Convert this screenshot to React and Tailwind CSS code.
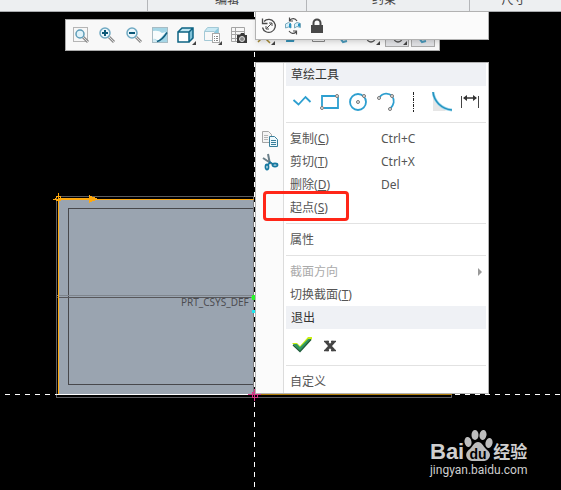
import React from 'react';

const ribbonGroups = [
  { label: '', className: 'w-[148px] border-r' },
  { label: '编辑', className: 'w-[159px] border-r' },
  { label: '约束', className: 'w-[163px] border-r pr-2' },
  { label: '尺寸', className: 'flex-1 pr-1' },
];

const Icon = ({ size = 20, children }) => (
  <svg width={size} height={size} viewBox={`0 0 ${size} ${size}`} fill="none" aria-hidden="true">
    {children}
  </svg>
);

const Corner = () => <path d="M20 16v4h-4z" fill="#444" />;

const Magnifier = ({ children }) => (
  <>
    <path d="M12 12l5 5" stroke="#8d8d8d" strokeWidth="3" />
    <path d="M12 12l5 5" stroke="#dcdcdc" />
    <circle cx="8" cy="8" r="5" fill="#eaf6fb" stroke="#6fa9c2" strokeWidth="1.5" />
    {children}
  </>
);

const ZoomFitIcon = () => (
  <Icon>
    <rect x="2.5" y="2.5" width="14" height="14" fill="#f7f7f7" stroke="#b5b5b5" />
    <path d="M12 12l5 5" stroke="#8d8d8d" strokeWidth="3" />
    <path d="M12 12l5 5" stroke="#dcdcdc" />
    <circle cx="9" cy="9" r="4" fill="#e0f3fa" stroke="#5e9db8" strokeWidth="1.5" />
  </Icon>
);

const ZoomInIcon = () => (
  <Icon>
    <Magnifier>
      <path d="M5 8h6M8 5v6" stroke="#0a5878" strokeWidth="2" />
    </Magnifier>
  </Icon>
);

const ZoomOutIcon = () => (
  <Icon>
    <Magnifier>
      <path d="M5 8h6" stroke="#0a5878" strokeWidth="2" />
    </Magnifier>
  </Icon>
);

const RepaintIcon = () => (
  <Icon>
    <rect x="2.5" y="2.5" width="15" height="15" fill="#a5d6e6" stroke="#a8bcc4" />
    <path d="M3 6q6-1 9 2l4-1-8 9q-3-3-5-2z" fill="#f8fcfd" />
    <path d="M3 14q3 0 4 3H3z" fill="#d3ecf4" />
    <path d="M7 16.500q5-1 10-9" stroke="#125f80" strokeWidth="1.500" />
  </Icon>
);

const CubeIcon = () => (
  <Icon>
    <path d="M2 7l4-4h11l-4 4z" fill="#bfe6f2" />
    <path d="M13 7l4-4v10l-4 4z" fill="#7fc1d8" />
    <path d="M2 7h11v10H2z" fill="#fff" />
    <path d="M2 7h11v10H2zM2 7l4-4h11v10l-4 4M13 7l4-4" stroke="#0d6383" strokeWidth="1.5" />
    <Corner />
  </Icon>
);

const SavedViewIcon = () => (
  <Icon>
    <path d="M2 6l3-3h11l-3 3z" fill="#c9e9f4" />
    <path d="M13 6l3-3v9l-3 3z" fill="#8cc9de" />
    <path d="M2.5 6.5h10v9h-10zM2.5 6.5l3-4h11v6" stroke="#a3c9d6" />
    <rect x="10.5" y="8.5" width="7" height="9" fill="#fff" stroke="#a8a8a8" />
    <path d="M12 11.500h1M14 11.500h2M12 13.500h1M14 13.500h2M12 15.500h1M14 15.500h2" stroke="#888" />
    <Corner />
  </Icon>
);

const ViewManagerIcon = () => (
  <Icon>
    <path d="M2.500 2.500h13v14h-13zM2 6.500h14M2 9.500h14M2 13.500h14M6.500 3v14" stroke="#a5a5a5" />
    <path d="M8 10h3l1-2h3l1 2h2v8H8z" fill="#3b3b3b" />
    <circle cx="13" cy="14" r="2.500" fill="#8a8a8a" stroke="#ddd" />
  </Icon>
);

const DatumIcon = () => (
  <Icon>
    <path d="M3 17L15 5M5 8l10 10" stroke="#a58a34" strokeWidth="1.5" />
    <Corner />
  </Icon>
);

const PlaneIcon = () => (
  <Icon>
    <path d="M6 6h9l-2 11H5z" fill="#3692b8" />
  </Icon>
);

const AnnotationIcon = () => (
  <Icon>
    <path d="M4.500 5.500h12v11h-12z" stroke="#888" />
  </Icon>
);

const SpinIcon = () => (
  <Icon>
    <path d="M6 13l3 4 4-1" stroke="#4a9bbd" strokeWidth="2" />
  </Icon>
);

const DisplayIcon = () => (
  <Icon>
    <circle cx="11" cy="13" r="4" stroke="#555" strokeWidth="1.5" />
    <Corner />
  </Icon>
);

const viewTools = [
  { name: 'Refit', icon: ZoomFitIcon },
  { name: 'Zoom in', icon: ZoomInIcon },
  { name: 'Zoom out', icon: ZoomOutIcon },
  { name: 'Repaint', icon: RepaintIcon },
  { name: 'Display style', icon: CubeIcon },
  { name: 'Saved orientations', icon: SavedViewIcon },
  { name: 'View manager', icon: ViewManagerIcon },
  { name: 'Datum display', icon: DatumIcon },
  { name: 'Sketch view', icon: PlaneIcon },
  { name: 'Annotation display', icon: AnnotationIcon },
  { name: 'Spin center', icon: SpinIcon },
  { name: 'Sketcher display', icon: DisplayIcon },
  { name: 'Shade closed loops', icon: DisplayIcon, pressed: true },
  { name: 'Highlight open ends', icon: SpinIcon, pressed: true },
];

const ToggleDirectionIcon = () => (
  <Icon>
    <path d="M5 5.500a6.500 6.500 0 1 1-1.500 6" stroke="#4a4a4a" strokeWidth="1.300" />
    <path d="M3.500 2.500v5h5" stroke="#4a4a4a" strokeWidth="1.300" />
    <path d="M7.500 12.500l5-5M7 10v3h3M10 7h3v3" stroke="#4a4a4a" />
  </Icon>
);

const ReplaceIcon = () => (
  <Icon>
    <path d="M2.500 8l3-1.500 2.500 1.500v4l-2.500-1-3 1zM11.500 8l2.500-1.500 3.500 1v4l-3.500-1-2.500 1.500z" fill="#d9f0f9" stroke="#78a9bd" />
    <path d="M6 8l2-1v5l-2-1zM15 8l2-1v4l-2-1z" fill="#2593c4" />
    <path d="M14 5c-2-3-5-3-7-1M6.500 1.500V5H10M6 15c2 3 5 3 7 1M13.500 18.500V15H10" stroke="#4a4a4a" strokeWidth="1.200" />
  </Icon>
);

const LockIcon = () => (
  <Icon>
    <rect x="4" y="9" width="12" height="8" fill="#484848" />
    <path d="M6.500 10V7a3.500 3.500 0 0 1 7 0v3" stroke="#484848" strokeWidth="2" />
  </Icon>
);

const Handle = ({ x, y }) => <circle cx={x} cy={y} r="1.500" fill="#e8e8e8" stroke="#777" />;

const PolylineIcon = () => (
  <Icon>
    <path d="M1.500 8l5 4.500 7-7.500 5 5" stroke="#2d9fd0" strokeWidth="1.800" />
  </Icon>
);

const RectangleIcon = () => (
  <Icon>
    <path d="M16 4H2v12M4 16h14V5" stroke="#2d9fd0" strokeWidth="1.800" />
    <Handle x={17} y={4} />
    <Handle x={2} y={16} />
  </Icon>
);

const CircleIcon = () => (
  <Icon>
    <circle cx="10" cy="10" r="8" stroke="#2d9fd0" strokeWidth="1.800" />
    <Handle x={10} y={10} />
    <Handle x={16} y={4} />
  </Icon>
);

const ArcIcon = () => (
  <Icon>
    <path d="M3 6C7 0 13 1 16 4c3 4 2 9-2 13" stroke="#2d9fd0" strokeWidth="1.800" />
    <Handle x={3} y={6} />
    <Handle x={16} y={4} />
    <Handle x={14} y={17} />
  </Icon>
);

const CenterlineIcon = () => (
  <Icon>
    <path d="M9.500 0v20" stroke="#222" strokeDasharray="3 1 1 1" />
  </Icon>
);

const FilletIcon = () => (
  <Icon>
    <path d="M1 4v15h13z" fill="#e6e6e6" />
    <path d="M1 0c1 9 8 17 19 18" stroke="#9fd8ee" strokeWidth="3" />
    <path d="M1 0c1 9 8 17 19 18" stroke="#2493bf" strokeWidth="1.500" />
  </Icon>
);

const DimensionIcon = () => (
  <Icon>
    <path d="M1.500 4v12M18.500 4v12" stroke="#444" />
    <path d="M4 6h12" stroke="#333" strokeWidth="1.500" />
    <path d="M3 6l4-3v6zM17 6l-4-3v6z" fill="#333" />
  </Icon>
);

const CheckIcon = () => (
  <Icon>
    <path d="M0 8h5l3 3 8-9h4v2L8 16z" fill="#c8ee12" />
    <path d="M1 9h4l3 3 8-8 3 0L8 16z" fill="#2f9a63" />
    <path d="M1 10l7 6.500L19 4.500" stroke="#1d5c3c" strokeWidth="1.300" />
  </Icon>
);

const CrossIcon = () => (
  <Icon>
    <path d="M6 6.500l8 9M14 6.500l-8 9" stroke="#444" strokeWidth="3" />
    <path d="M4 6.500h5M11 6.500h5M4 15.500h5M11 15.500h5" stroke="#444" strokeWidth="1.500" />
  </Icon>
);

const CopyIcon = () => (
  <Icon>
    <path d="M2.500 2.500h6l3 3v8h-9z" fill="#f4f4f4" stroke="#a5a5a5" />
    <path d="M4 6.500h4M4 8.500h4M4 10.500h4" stroke="#b5b5b5" />
    <path d="M9.500 7.500h5l3 3v7h-8z" fill="#eef9fd" stroke="#397f9b" />
    <path d="M11 11.500h5M11 13.500h5M11 15.500h5" stroke="#397f9b" />
  </Icon>
);

const CutIcon = () => (
  <Icon>
    <path d="M8 2l2 10M3 6l9 6" stroke="#6a7f89" strokeWidth="2" />
    <ellipse cx="7" cy="15" rx="1.500" ry="2.500" stroke="#1578a0" strokeWidth="1.800" />
    <ellipse cx="15" cy="13" rx="2.500" ry="1.500" stroke="#1578a0" strokeWidth="1.800" />
    <path d="M8 13l2-3 3 2" stroke="#1578a0" strokeWidth="1.500" />
  </Icon>
);

const quickTools = [
  { name: 'Toggle direction', icon: ToggleDirectionIcon },
  { name: 'Replace', icon: ReplaceIcon },
  { name: 'Lock', icon: LockIcon },
];

const sketchTools = [
  { name: 'Line chain', icon: PolylineIcon },
  { name: 'Rectangle', icon: RectangleIcon },
  { name: 'Circle', icon: CircleIcon },
  { name: 'Arc', icon: ArcIcon },
  { name: 'Centerline', icon: CenterlineIcon },
  { name: 'Fillet', icon: FilletIcon },
  { name: 'Dimension', icon: DimensionIcon },
];

const exitTools = [
  { name: 'OK', icon: CheckIcon },
  { name: 'Cancel', icon: CrossIcon },
];

const Ribbon = () => (
  <header className="flex h-3 overflow-hidden border-b border-[#a9abae] bg-[#edeff1] text-xs text-[#444]">
    {ribbonGroups.map((group) => (
      <div
        key={group.label}
        className={`flex items-end justify-center border-[#b4b6b9] pb-[3px] ${group.className}`}
      >
        {group.label}
      </div>
    ))}
  </header>
);

const ViewToolbar = () => (
  <div
    role="toolbar"
    className="relative mt-[7px] ml-[65px] flex h-8 w-[375px] items-center justify-between border border-[#aaa] bg-[#f8f8f8] pr-1 pl-[3px]"
  >
    {viewTools.map(({ name, icon: ToolIcon, pressed }) => (
      <button
        key={name}
        aria-label={name}
        className={`flex h-6 w-6 items-center justify-center ${
          pressed ? 'border border-[#aaa] bg-[#e2e3e6]' : ''
        }`}
      >
        <ToolIcon />
      </button>
    ))}
  </div>
);

const QuickToolbar = () => (
  <div
    role="toolbar"
    className="absolute top-[11px] left-[255px] flex h-[29px] w-[234px] items-center border border-[#b2b2b2] bg-[#fbfbfb] pl-px shadow-md"
  >
    {quickTools.map(({ name, icon: ToolIcon }) => (
      <button key={name} aria-label={name} className="flex w-6 justify-center">
        <ToolIcon />
      </button>
    ))}
  </div>
);

const MenuRow = ({ icon, children }) => (
  <div className="flex">
    <div className="flex w-7 shrink-0 items-center justify-center border-r border-[#dcdcdc] bg-[#fbfbfb]">
      {icon}
    </div>
    <div className="mx-0.5 min-w-0 flex-1">{children}</div>
  </div>
);

const MenuHeader = ({ children }) => (
  <MenuRow>
    <h2 className="flex h-[23px] items-center bg-[#eff1f5] pl-[5px] text-[#333]">{children}</h2>
  </MenuRow>
);

const MenuDivider = () => (
  <MenuRow>
    <hr className="border-[#e2e2e2]" />
  </MenuRow>
);

const MenuGap = () => (
  <MenuRow>
    <div className="h-1" />
  </MenuRow>
);

const MenuItem = ({ label, accessKey, shortcut, icon, disabled, submenu }) => (
  <MenuRow icon={icon}>
    <button
      disabled={disabled}
      className="flex h-[23px] w-full items-center pr-1 pl-1 text-left disabled:text-[#aaa]"
    >
      <span className="w-[91px]">
        {label}
        {accessKey && (
          <>
            (<u>{accessKey}</u>)
          </>
        )}
      </span>
      {shortcut && <span>{shortcut}</span>}
      {submenu && (
        <svg className="ml-auto" width="4" height="8" viewBox="0 0 4 8" aria-hidden="true">
          <path d="M0 0l4 4-4 4z" fill="#999" />
        </svg>
      )}
    </button>
  </MenuRow>
);

const MenuTools = ({ tools }) => (
  <MenuRow>
    <div className="flex h-9 items-center pb-1 pl-0.5">
      {tools.map(({ name, icon: ToolIcon }) => (
        <button key={name} aria-label={name} className="flex w-7 justify-center">
          <ToolIcon />
        </button>
      ))}
    </div>
  </MenuRow>
);

const ContextMenu = () => (
  <div className="absolute top-[62px] left-[255px] w-[234px] border border-[#b2b2b2] bg-white text-xs text-[#555]">
    <MenuHeader>草绘工具</MenuHeader>
    <MenuTools tools={sketchTools} />
    <MenuDivider />
    <MenuGap />
    <MenuItem label="复制" accessKey="C" shortcut="Ctrl+C" icon={<CopyIcon />} />
    <MenuItem label="剪切" accessKey="T" shortcut="Ctrl+X" icon={<CutIcon />} />
    <MenuItem label="删除" accessKey="D" shortcut="Del" />
    <div className="relative">
      <MenuItem label="起点" accessKey="S" />
      <span className="pointer-events-none absolute -top-[5px] left-[7px] h-[30px] w-[86px] rounded-sm border-[3px] border-[#ff2618]" />
    </div>
    <MenuGap />
    <MenuDivider />
    <MenuGap />
    <MenuItem label="属性" />
    <MenuGap />
    <MenuDivider />
    <MenuGap />
    <MenuItem label="截面方向" disabled submenu />
    <MenuItem label="切换截面" accessKey="T" />
    <MenuHeader>退出</MenuHeader>
    <MenuTools tools={exitTools} />
    <MenuDivider />
    <MenuGap />
    <MenuItem label="自定义" />
  </div>
);

const SketchCanvas = () => (
  <svg className="absolute inset-0 h-full w-full" aria-hidden="true" shapeRendering="crispEdges">
    <rect x="58" y="199" width="196" height="195" fill="#9aa4b0" />
    <path d="M254 196.500H56.500v201h395v-3" fill="none" stroke="#5c5c60" />
    <path d="M254 208.500H68.500v176H254" fill="none" stroke="#48484c" />
    <path d="M57 295.500h197" stroke="#7f858d" />
    <path d="M57 297.500h197" stroke="#57575b" />
    <path d="M253.500 197v198" stroke="#7b7b7d" />
    <path d="M5 394.500H561M254.500 12V490" stroke="#fff" strokeDasharray="5 5" />
    <path d="M55 394.500h199" stroke="#fff" />
    <path d="M256 394.500h196" stroke="#b07c08" />
    <path d="M53 199.500h201M58.500 193v201" stroke="#ffa80c" />
    <path d="M58 198.500h32" stroke="#ffa80c" />
    <path d="M89 195l9 4-9 4z" fill="#ffa80c" />
    <circle cx="58.500" cy="198.500" r="2.500" fill="none" stroke="#ffa80c" />
    <text x="181" y="306" fontSize="10" fill="#4c4c50" className="font-['Noto_Sans',sans-serif]">
      PRT_CSYS_DEF
    </text>
    <circle cx="254" cy="297.500" r="2.500" fill="#2bf52b" />
    <circle cx="254" cy="311.500" r="2" fill="#1fe8f0" />
    <path d="M248 394.500h13M254.500 389v12M252 392h5v5h-5z" stroke="#d83586" fill="none" />
  </svg>
);

const Watermark = () => (
  <div className="absolute right-[30px] bottom-3 w-[101px] text-[#cfcfcf]">
    <div className="flex h-8 items-end">
      <span className="font-['Liberation_Sans',sans-serif] text-[22px] leading-5 font-bold">Bai</span>
      <svg className="shrink-0" width="29" height="32" viewBox="0 0 29 32" aria-hidden="true">
        <g fill="#bdbdbd">
          <ellipse cx="4" cy="12" rx="3.500" ry="5" transform="rotate(-10 4 12)" />
          <ellipse cx="11" cy="5" rx="3.500" ry="5" />
          <ellipse cx="19" cy="5" rx="3.500" ry="5" transform="rotate(10 19 5)" />
          <ellipse cx="25" cy="13" rx="3.500" ry="5" transform="rotate(12 25 13)" />
          <path d="M14 12c4 0 5 4 8 7 4 3 5 6 3 9-2 4-7 3-11 3s-9 1-11-3c-2-4 0-7 3-9 3-3 4-7 8-7z" />
        </g>
        <text
          x="14"
          y="29"
          textAnchor="middle"
          fontSize="14"
          fill="#000"
          className="font-['Liberation_Sans',sans-serif] font-bold"
        >
          du
        </text>
      </svg>
      <span className="shrink-0 text-[17px] leading-5 font-bold">经验</span>
    </div>
    <div className="font-['Roboto',sans-serif] text-xs leading-4">jingyan.baidu.com</div>
  </div>
);

const App = () => (
  <div className="relative min-h-screen overflow-hidden bg-black font-['Noto_Sans','Noto_Sans_CJK_SC',sans-serif]">
    <SketchCanvas />
    <div className="relative">
      <Ribbon />
      <ViewToolbar />
    </div>
    <QuickToolbar />
    <ContextMenu />
    <Watermark />
  </div>
);

export default App;
